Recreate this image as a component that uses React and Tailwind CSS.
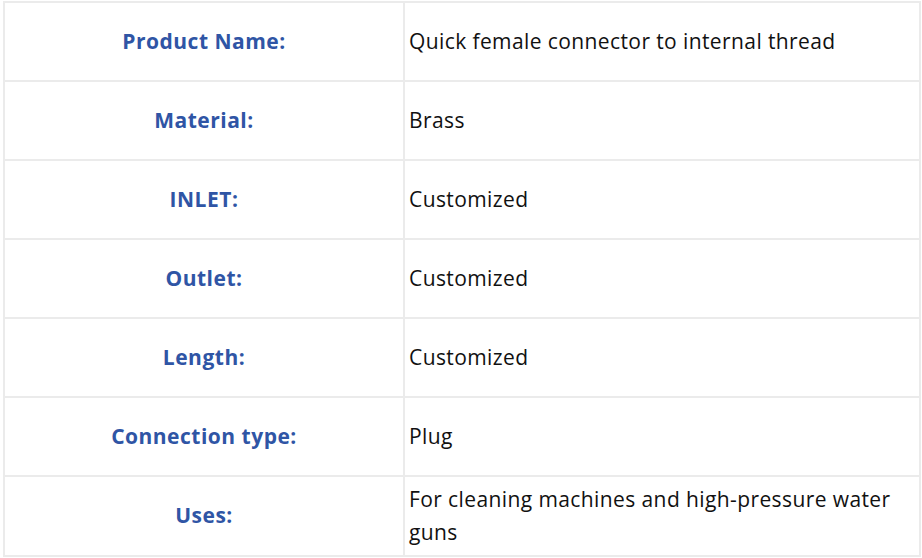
import React from "react";

const rows = [
  ["Product Name:", "Quick female connector to internal thread"],
  ["Material:", "Brass"],
  ["INLET:", "Customized"],
  ["Outlet:", "Customized"],
  ["Length:", "Customized"],
  ["Connection type:", "Plug"],
  ["Uses:", "For cleaning machines and high-pressure water guns"],
];

export default function App() {
  return (
    <div className="w-[922px] h-[558px] bg-white overflow-hidden pt-px pl-[3px]" style={{ fontFamily: '"Open Sans", "Noto Sans", sans-serif' }}>
      <div className="w-[918px] border-t-2 border-l-2 border-[#ebebeb] grid grid-cols-[400px_516px]">
        {rows.map(([k, v], i) => (
          <React.Fragment key={k}>
            <div className={`${i === rows.length - 1 ? "h-[80px]" : "h-[79px]"} border-r-2 border-b-2 border-[#ebebeb] flex items-center justify-center text-[21px] tracking-[0.5px] font-bold text-[#2f55a5]`}>
              {k}
            </div>
            <div className={`${i === rows.length - 1 ? "h-[80px]" : "h-[79px]"} border-r-2 border-b-2 border-[#ebebeb] flex items-center pl-[4px] pr-[16px] text-[21px] tracking-[0.4px] leading-[33px] text-[#111]`}>
              {v}
            </div>
          </React.Fragment>
        ))}
      </div>
    </div>
  );
}
